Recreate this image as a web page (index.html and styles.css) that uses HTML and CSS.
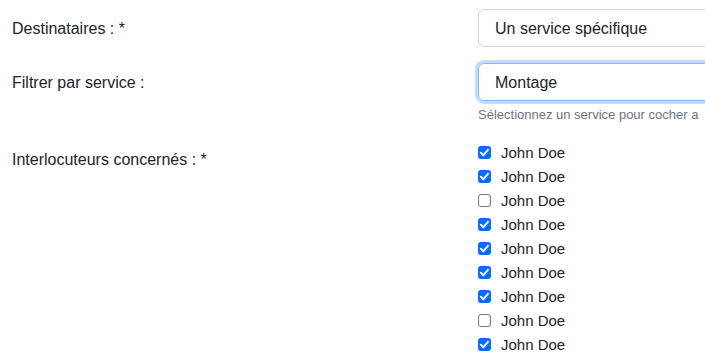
FILE: index.html
```html
<!DOCTYPE html>
<html lang="fr">
<head>
    <meta charset="UTF-8">
    <meta name="viewport" content="width=device-width, initial-scale=1.0">
    <title>Destinataires</title>
    <link rel="stylesheet" href="styles.css">
</head>
<body>
    <form class="form">
        <div class="row">
            <label class="col-label">Destinataires : *</label>
            <div class="field">
                <div class="select">Un service spécifique</div>
            </div>
        </div>
        <div class="row">
            <label class="col-label">Filtrer par service :</label>
            <div class="field">
                <div class="select focus">Montage</div>
                <p class="form-text">Sélectionnez un service pour cocher a</p>
            </div>
        </div>
        <div class="row">
            <label class="col-label">Interlocuteurs concernés : *</label>
            <div class="field">
                <label class="check"><span class="box on"><svg viewBox="0 0 13 13"><path d="M3 6.8l2.4 2.4 4.6-5.4"/></svg></span>John Doe</label>
                <label class="check"><span class="box on"><svg viewBox="0 0 13 13"><path d="M3 6.8l2.4 2.4 4.6-5.4"/></svg></span>John Doe</label>
                <label class="check"><span class="box"></span>John Doe</label>
                <label class="check"><span class="box on"><svg viewBox="0 0 13 13"><path d="M3 6.8l2.4 2.4 4.6-5.4"/></svg></span>John Doe</label>
                <label class="check"><span class="box on"><svg viewBox="0 0 13 13"><path d="M3 6.8l2.4 2.4 4.6-5.4"/></svg></span>John Doe</label>
                <label class="check"><span class="box on"><svg viewBox="0 0 13 13"><path d="M3 6.8l2.4 2.4 4.6-5.4"/></svg></span>John Doe</label>
                <label class="check"><span class="box on"><svg viewBox="0 0 13 13"><path d="M3 6.8l2.4 2.4 4.6-5.4"/></svg></span>John Doe</label>
                <label class="check"><span class="box"></span>John Doe</label>
                <label class="check"><span class="box on"><svg viewBox="0 0 13 13"><path d="M3 6.8l2.4 2.4 4.6-5.4"/></svg></span>John Doe</label>
            </div>
        </div>
    </form>
</body>
</html>
```

FILE: styles.css
```css
*{
    margin: 0;
    padding: 0;
    box-sizing: border-box;
}
body{
    font-family: "Liberation Sans", Arial, sans-serif;
    color: #212529;
    background: #fff;
    overflow: hidden;
}
.form{
    padding-top: 9px;
    width: 900px;
}
.row{
    display: flex;
    margin-bottom: 16px;
}
.col-label{
    width: 478px;
    padding: 8px 12px 0;
    font-size: 16px;
    line-height: 24px;
}
.field{
    width: 400px;
}
.select{
    height: 38px;
    border: 1px solid #ced4da;
    border-radius: 6px;
    padding: 0 16px;
    font-size: 16px;
    line-height: 37px;
}
.select.focus{
    border-color: #86b7fe;
    box-shadow: 0 0 0 3px rgba(13, 110, 253, .25);
}
.form-text{
    margin-top: 4px;
    font-size: 13px;
    line-height: 19px;
    color: #6c757d;
    white-space: nowrap;
}
.check{
    display: flex;
    align-items: center;
    height: 24px;
    font-size: 15px;
}
.box{
    width: 13px;
    height: 13px;
    margin-right: 10px;
    border: 1px solid #767676;
    border-radius: 3px;
    background: #fff;
}
.box.on{
    border: 0;
    background: #0b6cfd;
}
.box svg{
    display: block;
    width: 13px;
    height: 13px;
    fill: none;
    stroke: #fff;
    stroke-width: 2;
    stroke-linecap: round;
    stroke-linejoin: round;
}
```
